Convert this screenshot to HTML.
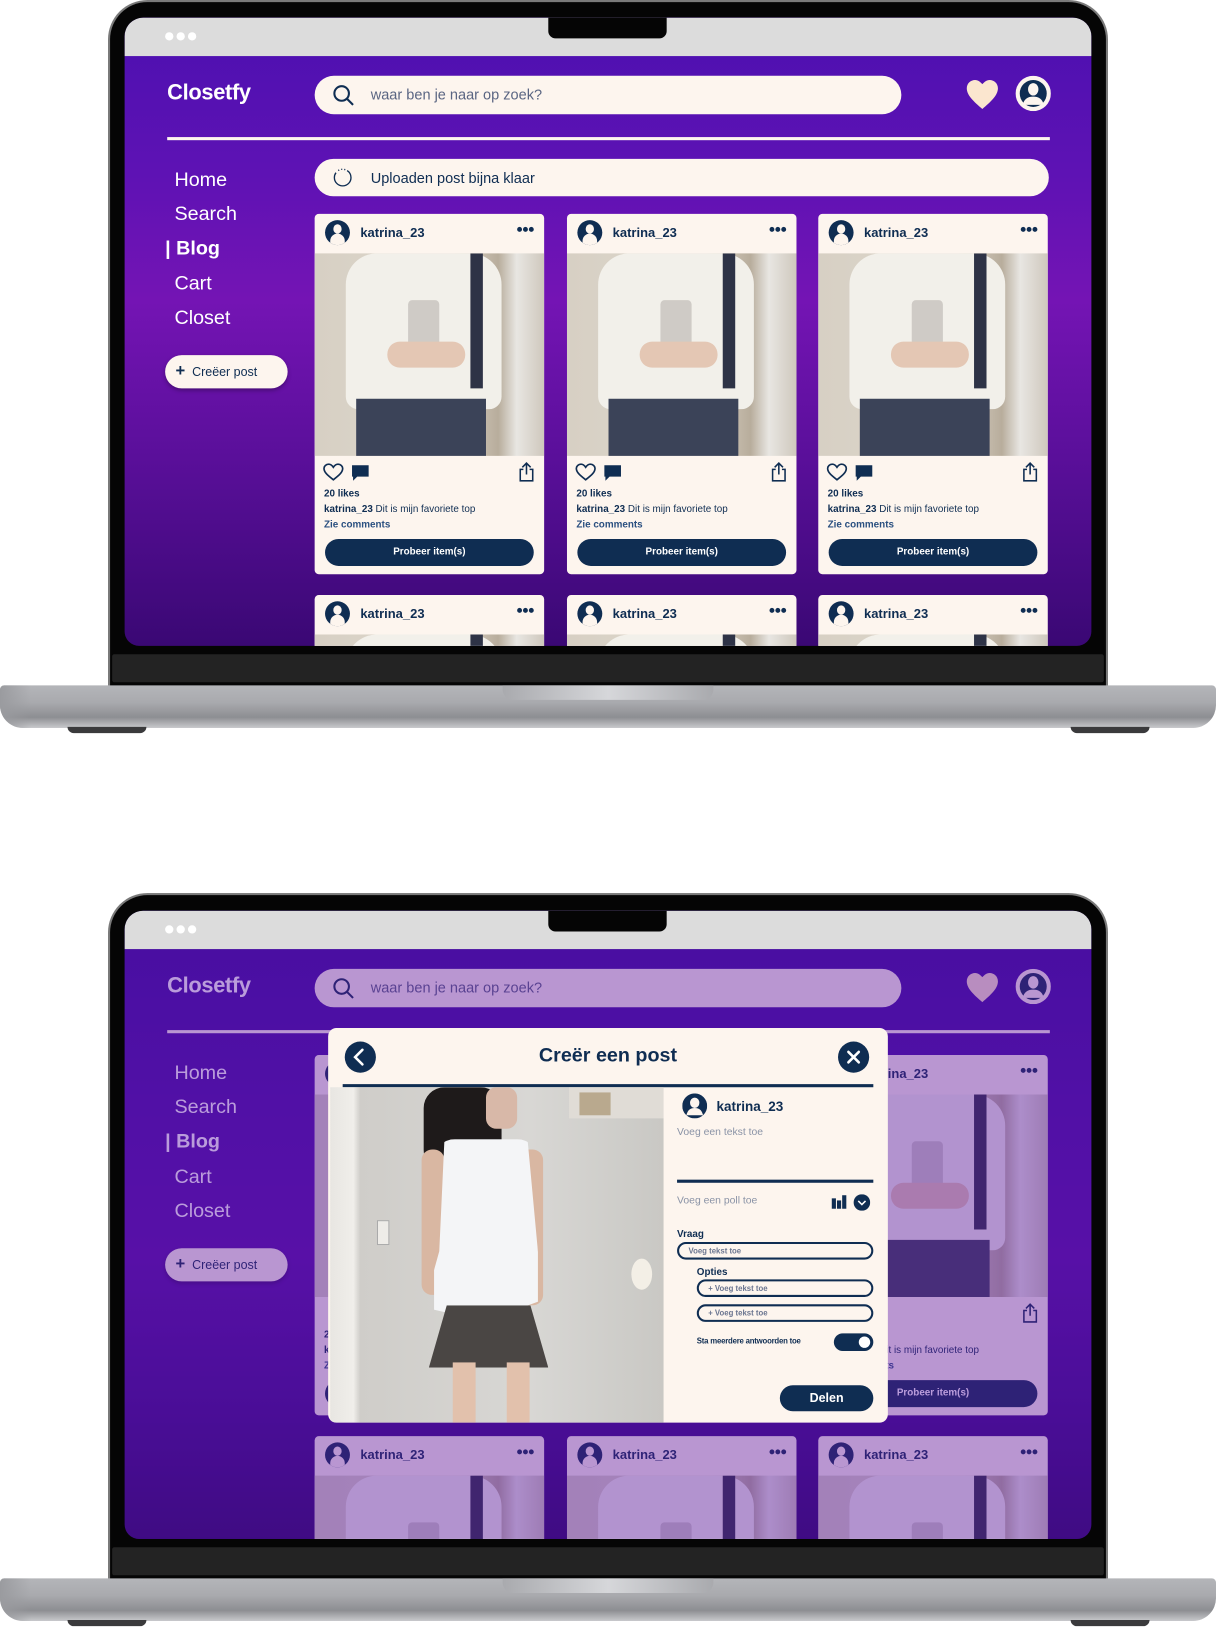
<!DOCTYPE html>
<html><head><meta charset="utf-8">
<style>
*{box-sizing:border-box;margin:0;padding:0}
html,body{width:1216px;height:1628px;overflow:hidden;background:#fff;font-family:"Liberation Sans","DejaVu Sans",sans-serif}
#wrap{position:absolute;left:0;top:0;width:1171px;height:1567px;overflow:hidden;transform:scale(1.03843);transform-origin:0 0}
.lap{position:absolute;left:0;width:1171px;height:706px}
.bez{position:absolute;left:104px;top:0;width:963px;height:662px;background:#050505;border-radius:38px 38px 0 0;border:2px solid #7a7a7a;border-bottom:none}
.chin{position:absolute;left:108px;top:630px;width:955px;height:27px;background:#232323;border-radius:2px}
.base{position:absolute;left:0;top:660px;width:1171px;height:41px;border-radius:4px 4px 22px 22px;background:linear-gradient(#b4b5b9 0%,#a9aaae 40%,#8d8e92 75%,#c8c9cc 100%)}
.base:before{content:"";position:absolute;left:0;top:0;width:30px;height:41px;border-radius:4px 0 0 22px;background:linear-gradient(90deg,#9a9b9f,transparent)}
.tp{position:absolute;left:484px;top:660px;width:203px;height:14px;border-radius:0 0 10px 10px;background:linear-gradient(90deg,#a9aaae,#d6d7da 50%,#a9aaae)}
.foot{position:absolute;top:700px;width:76px;height:6px;background:#3a3a3c;border-radius:0 0 6px 6px}
.scr{position:absolute;left:120px;top:17px;width:931px;height:605px;overflow:hidden;border-radius:18px 18px 14px 14px;background:linear-gradient(180deg,#4c10b0 0%,#5e12b4 25%,#7414b4 45%,#5a0f9a 70%,#3a0874 100%)}
.gbar{position:absolute;left:0;top:0;width:931px;height:37px;background:#dcdcdc}
.dots{position:absolute;left:39px;top:14px;font-size:0}
.dots i{display:inline-block;width:8px;height:8px;border-radius:50%;background:#fff;margin-right:3px}
.notch{position:absolute;left:408px;top:0;width:114px;height:20px;background:#050505;border-radius:0 0 7px 7px}
.a{position:absolute}
.logo{left:41px;top:61px;color:#fff;font-weight:bold;font-size:21px;letter-spacing:-.3px}
.srch{left:183px;top:56px;width:565px;height:37px;border-radius:19px;background:#fdf5ee}
.pill-t{position:absolute;left:54px;top:10px;font-size:14px;color:#5a6582}
.line{left:41px;top:115px;width:850px;height:3px;background:#fdf5ee}
.nav{left:48px;color:#fff;font-size:19px}
.cbtn{left:39px;top:325px;width:118px;height:32px;border-radius:16px;background:#fdf5ee;color:#0f2d52;font-size:12px;line-height:32px;padding-left:10px;box-shadow:0 2px 4px rgba(0,0,0,.3)}
.up{left:183px;top:136px;width:707px;height:36px;border-radius:18px;background:#fdf5ee}
.card{position:absolute;width:221px;height:347px;background:#fdf5ee;border-radius:4px;overflow:hidden}
.av{position:absolute;width:24px;height:24px;border-radius:50%;background:#0f2d52;overflow:hidden}
.av:before{content:"";position:absolute;left:8px;top:4px;width:8px;height:9px;border-radius:50%;background:#fdf5ee}
.av:after{content:"";position:absolute;left:5px;top:13px;width:14px;height:12px;border-radius:7px 7px 0 0;background:#fdf5ee}
.un{position:absolute;left:44px;top:11px;font-weight:bold;font-size:12.5px;color:#0f2d52}
.dd{position:absolute;right:10px;top:9px;font-size:11px;font-weight:bold;color:#0f2d52;letter-spacing:-1px}
.ph{position:absolute;left:0;top:38px;width:221px;height:195px;background:linear-gradient(90deg,#d7d0c4 0%,#ddd6cb 60%,#b8ad9c 80%,#e8e6e2 88%,#cfc8bd 100%);overflow:hidden}
.ph .top{position:absolute;left:30px;top:0;width:150px;height:150px;background:#f2f0ea;border-radius:30px 30px 12px 12px}
.ph .sk{position:absolute;left:40px;top:140px;width:125px;height:60px;background:#3b4358}
.ph .phn{position:absolute;left:90px;top:45px;width:30px;height:60px;background:#cfcbc6;border-radius:4px}
.ph .bag{position:absolute;left:150px;top:0;width:12px;height:130px;background:#2e3346}
.ph .hand{position:absolute;left:70px;top:85px;width:75px;height:25px;background:#e4c7b4;border-radius:12px}
.ic{position:absolute;top:240px}
.lk{position:absolute;left:9px;top:264px;font-size:9.5px;font-weight:bold;color:#0f2d52}
.cp{position:absolute;left:9px;top:279px;font-size:9.5px;color:#0f2d52;white-space:nowrap}
.zc{position:absolute;left:9px;top:294px;font-size:9.5px;font-weight:bold;color:#2b5080}
.pb{position:absolute;left:10px;top:313px;width:201px;height:26px;border-radius:13px;background:#0f2d52;color:#fff;font-size:9.5px;font-weight:bold;text-align:center;line-height:26px}
.ov{position:absolute;left:0;top:37px;width:931px;height:568px;background:rgba(90,20,170,.42)}
.modal{position:absolute;left:196px;top:113px;width:539px;height:380px;background:#fdf5ee;border-radius:8px;overflow:hidden}
.circ{position:absolute;width:30px;height:30px;border-radius:50%;background:#0f2d52}
.mt{position:absolute;left:0;width:539px;top:16px;text-align:center;font-weight:bold;font-size:19px;color:#0f2d52}
.inp{position:absolute;border:2px solid #0f2d52;border-radius:9px;font-size:7.5px;font-weight:bold;color:#6a7590;padding-left:9px;line-height:13px}
.sm{position:absolute;font-size:10px;color:#8a93a6}
</style></head><body><div id="wrap">

<!-- LAPTOP 1 -->
<div class="lap" style="top:0">
<div class="bez"></div><div class="chin"></div>
<div class="scr">
 <div class="gbar"></div><div class="dots"><i></i><i></i><i></i></div><div class="notch"></div>
 <div class="a logo">Closetfy</div>
 <div class="a srch"><svg style="position:absolute;left:17px;top:8px" width="22" height="22" viewBox="0 0 22 22"><circle cx="9" cy="9" r="7" fill="none" stroke="#0f2d52" stroke-width="2"/><path d="M14 14l6 6" stroke="#0f2d52" stroke-width="2"/></svg><span class="pill-t">waar ben je naar op zoek?</span></div>
 <svg class="a" style="left:810px;top:59px" width="32" height="30" viewBox="0 0 32 30"><path d="M16 29C8 22 1 16 1 9 1 4 5 1 9 1c3 0 5 2 7 4 2-2 4-4 7-4 4 0 8 3 8 8 0 7-7 13-15 20z" fill="#fbe6cf"/></svg>
 <svg class="a" style="left:858px;top:56px" width="34" height="34" viewBox="0 0 34 34"><circle cx="17" cy="17" r="17" fill="#fdf5ee"/><circle cx="17" cy="17" r="13" fill="#0f2d52"/><ellipse cx="17" cy="13" rx="5" ry="6" fill="#fdf5ee"/><path d="M7 28c1-6 5-8 10-8s9 2 10 8z" fill="#fdf5ee"/></svg>
 <div class="a line"></div>
 <div class="a nav" style="top:146px">Home</div>
 <div class="a nav" style="top:179px">Search</div>
 <div class="a nav" style="top:212px;left:39px;font-weight:bold">| Blog</div>
 <div class="a nav" style="top:246px">Cart</div>
 <div class="a nav" style="top:279px">Closet</div>
 <div class="a cbtn"><b style="font-size:16px">+</b>&nbsp; Creëer post</div>
 <div class="a up"><svg style="position:absolute;left:17px;top:8px" width="20" height="20" viewBox="0 0 20 20"><circle cx="10" cy="10" r="8" fill="none" stroke="#0f2d52" stroke-width="1.3" stroke-dasharray="30 3 1 2 1 2 1 2"/></svg><span class="pill-t" style="color:#0f2d52;top:10px">Uploaden post bijna klaar</span></div>

 <div class="card" style="left:183px;top:189px">
  <div class="av" style="left:10px;top:6px"></div><div class="un">katrina_23</div><div class="dd">●●●</div>
  <div class="ph"><div class="top"></div><div class="bag"></div><div class="phn"></div><div class="hand"></div><div class="sk"></div></div>
  <svg class="ic" style="left:8px" width="20" height="18" viewBox="0 0 20 18"><path d="M10 16C5 12 1 9 1 5 1 3 3 1 5.5 1 7.5 1 9 2.5 10 4c1-1.5 2.5-3 4.5-3C17 1 19 3 19 5c0 4-4 7-9 11z" fill="none" stroke="#0f2d52" stroke-width="1.6"/></svg>
  <svg class="ic" style="left:35px;top:241px" width="18" height="18" viewBox="0 0 18 18"><path d="M1 1h16v11H6l-4 4v-4H1z" fill="#0f2d52"/></svg>
  <svg class="ic" style="right:10px;top:238px" width="14" height="20" viewBox="0 0 14 20"><path d="M7 13V2M3 6l4-4 4 4M4 8H1v11h12V8h-3" fill="none" stroke="#0f2d52" stroke-width="1.5"/></svg>
  <div class="lk">20 likes</div><div class="cp"><b>katrina_23</b> Dit is mijn favoriete top</div><div class="zc">Zie comments</div><div class="pb">Probeer item(s)</div>
 </div>
 <div class="card" style="left:426px;top:189px">
  <div class="av" style="left:10px;top:6px"></div><div class="un">katrina_23</div><div class="dd">●●●</div>
  <div class="ph"><div class="top"></div><div class="bag"></div><div class="phn"></div><div class="hand"></div><div class="sk"></div></div>
  <svg class="ic" style="left:8px" width="20" height="18" viewBox="0 0 20 18"><path d="M10 16C5 12 1 9 1 5 1 3 3 1 5.5 1 7.5 1 9 2.5 10 4c1-1.5 2.5-3 4.5-3C17 1 19 3 19 5c0 4-4 7-9 11z" fill="none" stroke="#0f2d52" stroke-width="1.6"/></svg>
  <svg class="ic" style="left:35px;top:241px" width="18" height="18" viewBox="0 0 18 18"><path d="M1 1h16v11H6l-4 4v-4H1z" fill="#0f2d52"/></svg>
  <svg class="ic" style="right:10px;top:238px" width="14" height="20" viewBox="0 0 14 20"><path d="M7 13V2M3 6l4-4 4 4M4 8H1v11h12V8h-3" fill="none" stroke="#0f2d52" stroke-width="1.5"/></svg>
  <div class="lk">20 likes</div><div class="cp"><b>katrina_23</b> Dit is mijn favoriete top</div><div class="zc">Zie comments</div><div class="pb">Probeer item(s)</div>
 </div>
 <div class="card" style="left:668px;top:189px">
  <div class="av" style="left:10px;top:6px"></div><div class="un">katrina_23</div><div class="dd">●●●</div>
  <div class="ph"><div class="top"></div><div class="bag"></div><div class="phn"></div><div class="hand"></div><div class="sk"></div></div>
  <svg class="ic" style="left:8px" width="20" height="18" viewBox="0 0 20 18"><path d="M10 16C5 12 1 9 1 5 1 3 3 1 5.5 1 7.5 1 9 2.5 10 4c1-1.5 2.5-3 4.5-3C17 1 19 3 19 5c0 4-4 7-9 11z" fill="none" stroke="#0f2d52" stroke-width="1.6"/></svg>
  <svg class="ic" style="left:35px;top:241px" width="18" height="18" viewBox="0 0 18 18"><path d="M1 1h16v11H6l-4 4v-4H1z" fill="#0f2d52"/></svg>
  <svg class="ic" style="right:10px;top:238px" width="14" height="20" viewBox="0 0 14 20"><path d="M7 13V2M3 6l4-4 4 4M4 8H1v11h12V8h-3" fill="none" stroke="#0f2d52" stroke-width="1.5"/></svg>
  <div class="lk">20 likes</div><div class="cp"><b>katrina_23</b> Dit is mijn favoriete top</div><div class="zc">Zie comments</div><div class="pb">Probeer item(s)</div>
 </div>
 <div class="card" style="left:183px;top:556px"><div class="av" style="left:10px;top:6px"></div><div class="un">katrina_23</div><div class="dd">●●●</div><div class="ph"><div class="top"></div><div class="bag"></div></div></div>
 <div class="card" style="left:426px;top:556px"><div class="av" style="left:10px;top:6px"></div><div class="un">katrina_23</div><div class="dd">●●●</div><div class="ph"><div class="top"></div><div class="bag"></div></div></div>
 <div class="card" style="left:668px;top:556px"><div class="av" style="left:10px;top:6px"></div><div class="un">katrina_23</div><div class="dd">●●●</div><div class="ph"><div class="top"></div><div class="bag"></div></div></div>
</div>
<div class="base"></div><div class="tp"></div>
<div class="foot" style="left:65px"></div><div class="foot" style="left:1031px"></div>
</div>

<!-- LAPTOP 2 -->
<div class="lap" style="top:860px">
<div class="bez"></div><div class="chin"></div>
<div class="scr" style="background:linear-gradient(180deg,#3a0c9c 0%,#4a0ea4 30%,#560fa6 55%,#3e0a8a 80%,#2c0668 100%)">
 <div class="gbar"></div><div class="dots"><i></i><i></i><i></i></div><div class="notch"></div>
 <div class="a logo">Closetfy</div>
 <div class="a srch"><svg style="position:absolute;left:17px;top:8px" width="22" height="22" viewBox="0 0 22 22"><circle cx="9" cy="9" r="7" fill="none" stroke="#0f2d52" stroke-width="2"/><path d="M14 14l6 6" stroke="#0f2d52" stroke-width="2"/></svg><span class="pill-t">waar ben je naar op zoek?</span></div>
 <svg class="a" style="left:810px;top:59px" width="32" height="30" viewBox="0 0 32 30"><path d="M16 29C8 22 1 16 1 9 1 4 5 1 9 1c3 0 5 2 7 4 2-2 4-4 7-4 4 0 8 3 8 8 0 7-7 13-15 20z" fill="#fbe6cf"/></svg>
 <svg class="a" style="left:858px;top:56px" width="34" height="34" viewBox="0 0 34 34"><circle cx="17" cy="17" r="17" fill="#fdf5ee"/><circle cx="17" cy="17" r="13" fill="#0f2d52"/><ellipse cx="17" cy="13" rx="5" ry="6" fill="#fdf5ee"/><path d="M7 28c1-6 5-8 10-8s9 2 10 8z" fill="#fdf5ee"/></svg>
 <div class="a line"></div>
 <div class="a nav" style="top:146px">Home</div>
 <div class="a nav" style="top:179px">Search</div>
 <div class="a nav" style="top:212px;left:39px;font-weight:bold">| Blog</div>
 <div class="a nav" style="top:246px">Cart</div>
 <div class="a nav" style="top:279px">Closet</div>
 <div class="a cbtn"><b style="font-size:16px">+</b>&nbsp; Creëer post</div>
 <div class="card" style="left:183px;top:139px"><div class="av" style="left:10px;top:6px"></div><div class="un">katrina_23</div><div class="dd">●●●</div><div class="ph"><div class="top"></div><div class="bag"></div><div class="phn"></div><div class="hand"></div><div class="sk"></div></div><div class="lk">20 likes</div><div class="cp"><b>katrina_23</b> Dit is mijn favoriete top</div><div class="zc">Zie comments</div><div class="pb">Probeer item(s)</div></div>
 <div class="card" style="left:426px;top:139px"><div class="ph"></div></div>
 <div class="card" style="left:668px;top:139px"><div class="av" style="left:10px;top:6px"></div><div class="un">katrina_23</div><div class="dd">●●●</div><div class="ph"><div class="top"></div><div class="bag"></div><div class="phn"></div><div class="hand"></div><div class="sk"></div></div>
  <svg class="ic" style="right:10px;top:238px" width="14" height="20" viewBox="0 0 14 20"><path d="M7 13V2M3 6l4-4 4 4M4 8H1v11h12V8h-3" fill="none" stroke="#0f2d52" stroke-width="1.5"/></svg>
  <div class="lk">20 likes</div><div class="cp"><b>katrina_23</b> Dit is mijn favoriete top</div><div class="zc">Zie comments</div><div class="pb">Probeer item(s)</div></div>
 <div class="card" style="left:183px;top:506px"><div class="av" style="left:10px;top:6px"></div><div class="un">katrina_23</div><div class="dd">●●●</div><div class="ph"><div class="top"></div><div class="bag"></div><div class="phn"></div></div></div>
 <div class="card" style="left:426px;top:506px"><div class="av" style="left:10px;top:6px"></div><div class="un">katrina_23</div><div class="dd">●●●</div><div class="ph"><div class="top"></div><div class="bag"></div><div class="phn"></div></div></div>
 <div class="card" style="left:668px;top:506px"><div class="av" style="left:10px;top:6px"></div><div class="un">katrina_23</div><div class="dd">●●●</div><div class="ph"><div class="top"></div><div class="bag"></div><div class="phn"></div></div></div>
 <div class="ov"></div>

 <div class="modal">
  <div class="circ" style="left:16px;top:13px"><svg width="30" height="30" viewBox="0 0 30 30"><path d="M17 8l-7 7 7 7" fill="none" stroke="#fff" stroke-width="2.5" stroke-linecap="round"/></svg></div>
  <div class="mt">Creër een post</div>
  <div class="circ" style="left:491px;top:13px"><svg width="30" height="30" viewBox="0 0 30 30"><path d="M10 10l10 10M20 10L10 20" stroke="#fff" stroke-width="2.5" stroke-linecap="round"/></svg></div>
  <div class="a" style="left:14px;top:54px;width:511px;height:3px;background:#0f2d52"></div>
  <div class="a" style="left:2px;top:57px;width:321px;height:323px;overflow:hidden;background:linear-gradient(90deg,#e8e6e2 0%,#f0eeea 7%,#cfcdc9 9%,#d8d7d4 60%,#c9c8c4 100%)">
   <div class="a" style="left:230px;top:0;width:91px;height:30px;background:#e0dcd6"></div>
   <div class="a" style="left:240px;top:5px;width:30px;height:22px;background:#b9a98e"></div>
   <div class="a" style="left:90px;top:0;width:75px;height:90px;background:#1e1a1a;border-radius:20px 20px 30px 30px"></div>
   <div class="a" style="left:150px;top:0;width:30px;height:40px;background:#d8b8a8;border-radius:10px"></div>
   <div class="a" style="left:45px;top:128px;width:12px;height:24px;background:#eeece8;border:1px solid #aaa"></div>
   <div class="a" style="left:88px;top:60px;width:22px;height:140px;background:#d9b7a2;border-radius:10px"></div>
   <div class="a" style="left:180px;top:60px;width:25px;height:150px;background:#d9b7a2;border-radius:10px"></div>
   <div class="a" style="left:100px;top:50px;width:100px;height:180px;background:#f4f5f7;border-radius:20px 20px 0 0;clip-path:polygon(10% 0,90% 0,100% 60%,110% 85%,60% 95%,45% 120%,30% 95%,-10% 90%,5% 60%)"></div>
   <div class="a" style="left:95px;top:210px;width:115px;height:60px;background:#4a4644;clip-path:polygon(0 100%,15% 0,85% 0,100% 100%)"></div>
   <div class="a" style="left:118px;top:265px;width:22px;height:60px;background:#e2c1ac"></div>
   <div class="a" style="left:170px;top:265px;width:22px;height:60px;background:#e2c1ac"></div>
   <div class="a" style="left:290px;top:165px;width:20px;height:30px;background:#f3efe6;border-radius:50%"></div>
  </div>
  <svg class="a" style="left:341px;top:63px" width="24" height="24" viewBox="0 0 24 24"><circle cx="12" cy="12" r="12" fill="#0f2d52"/><ellipse cx="12" cy="9" rx="4.5" ry="5" fill="#fdf5ee"/><path d="M4 21c1-5 4-7 8-7s7 2 8 7z" fill="#fdf5ee"/></svg>
  <div class="a" style="left:374px;top:68px;font-weight:bold;font-size:13px;color:#0f2d52">katrina_23</div>
  <div class="sm" style="left:336px;top:95px">Voeg een tekst toe</div>
  <div class="a" style="left:336px;top:146px;width:189px;height:3px;background:#0f2d52"></div>
  <div class="sm" style="left:336px;top:161px">Voeg een poll toe</div>
  <div class="a" style="left:485px;top:161px;font-size:0"><i style="display:inline-block;width:4px;height:10px;background:#0f2d52;margin-right:1px;vertical-align:bottom"></i><i style="display:inline-block;width:4px;height:8px;background:#0f2d52;margin-right:1px;vertical-align:bottom"></i><i style="display:inline-block;width:4px;height:13px;background:#0f2d52;vertical-align:bottom"></i></div>
  <svg class="a" style="left:506px;top:160px" width="16" height="16" viewBox="0 0 16 16"><circle cx="8" cy="8" r="8" fill="#0f2d52"/><path d="M4.5 6.5l3.5 3.5 3.5-3.5" fill="none" stroke="#fff" stroke-width="1.5"/></svg>
  <div class="a" style="left:336px;top:193px;font-size:9.5px;font-weight:bold;color:#0f2d52">Vraag</div>
  <div class="inp" style="left:336px;top:206px;width:189px;height:17px">Voeg tekst toe</div>
  <div class="a" style="left:355px;top:230px;font-size:9.5px;font-weight:bold;color:#0f2d52">Opties</div>
  <div class="inp" style="left:355px;top:242px;width:170px;height:17px">+ Voeg tekst toe</div>
  <div class="inp" style="left:355px;top:266px;width:170px;height:17px">+ Voeg tekst toe</div>
  <div class="a" style="left:355px;top:297px;font-size:7.5px;font-weight:bold;color:#0f2d52;letter-spacing:-.2px">Sta meerdere antwoorden toe</div>
  <div class="a" style="left:487px;top:294px;width:38px;height:17px;border-radius:9px;background:#0f2d52"><i style="position:absolute;right:3px;top:3px;width:11px;height:11px;border-radius:50%;background:#fff"></i></div>
  <div class="a" style="left:435px;top:344px;width:90px;height:25px;border-radius:13px;background:#0f2d52;color:#fff;font-weight:bold;font-size:12px;text-align:center;line-height:25px">Delen</div>
 </div>
</div>
<div class="base"></div><div class="tp"></div>
<div class="foot" style="left:65px"></div><div class="foot" style="left:1031px"></div>
</div>

</div></body></html>
